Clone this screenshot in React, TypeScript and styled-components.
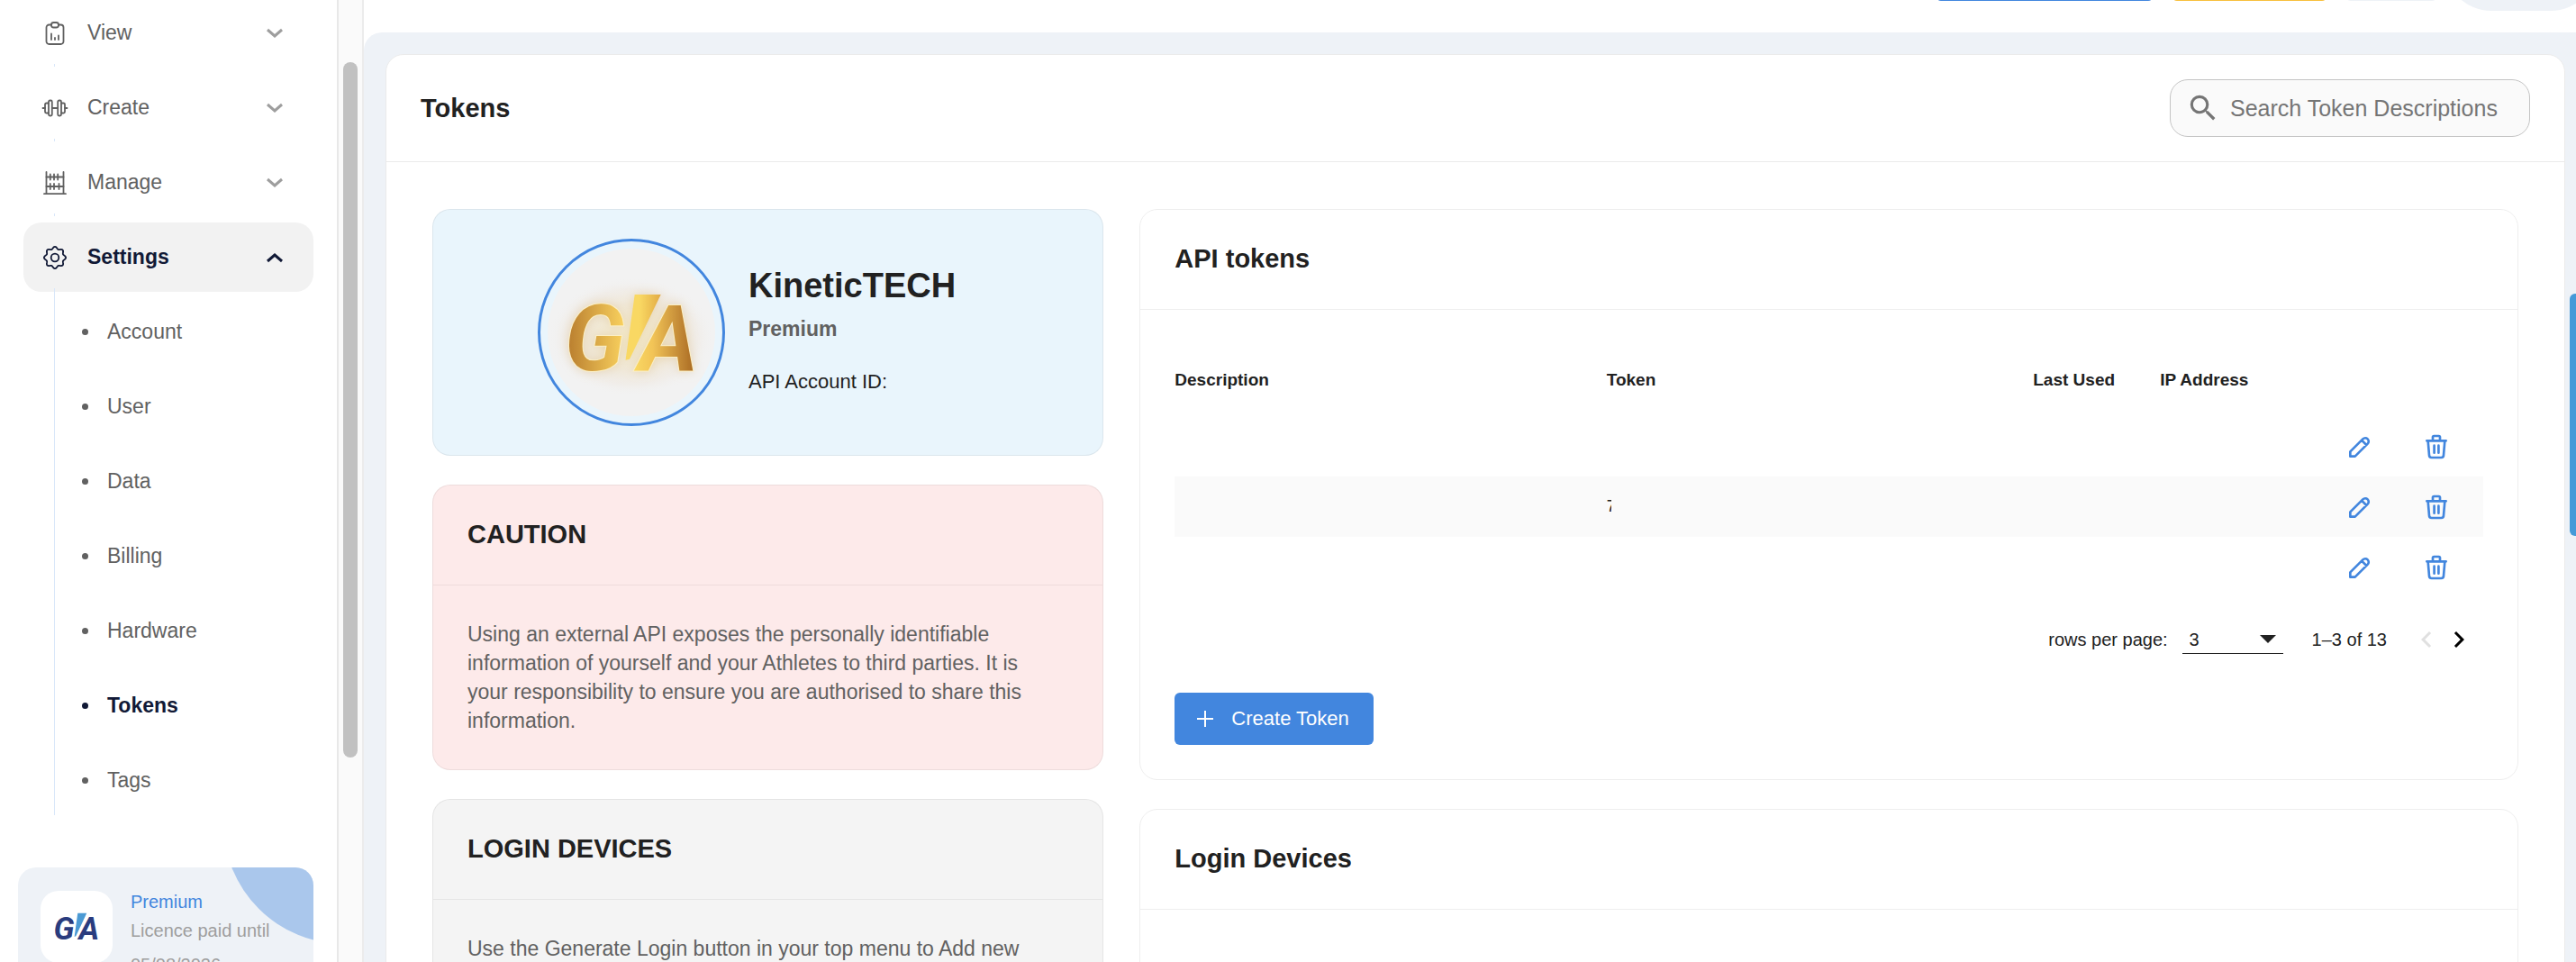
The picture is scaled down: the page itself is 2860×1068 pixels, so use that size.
import React, { useState } from "react";
import styled, { createGlobalStyle } from "styled-components";

const color = {
  blue: "#4286de",
  ink: "#212121",
  navy: "#111936",
  text: "#616161",
  muted: "#9e9e9e",
  surface: "#eef2f7",
  line: "#eeeeee",
};

const GlobalStyle = createGlobalStyle`
  *, *::before, *::after { box-sizing: border-box; }
  body {
    margin: 0;
    background: #fff;
    color: ${color.ink};
    font-family: "Liberation Sans", Arial, Helvetica, sans-serif;
  }
  button, input, select { font-family: inherit; }
  h1, h2, h3, p, ul { margin: 0; padding: 0; }
  ul { list-style: none; }
`;

/* ---------- Page frame ---------- */

const Page = styled.div`
  display: flex;
  height: 100vh;
  overflow: hidden;
`;

const Sidebar = styled.aside`
  flex: 0 0 374px;
  overflow: hidden;
`;

const ScrollTrack = styled.div`
  flex: 0 0 30px;
  display: flex;
  flex-direction: column;
  align-items: center;
  background: #fafafa;
  border-left: 2px solid #e8e8e8;
  border-right: 2px solid #ececec;
`;

const ScrollSpace = styled.div<{ $share: number }>`
  flex: ${(p) => p.$share} 0 0;
`;

const ScrollThumb = styled.div`
  flex: 772 0 0;
  width: 16px;
  border-radius: 8px;
  background: #c1c1c1;
`;

const Column = styled.div`
  flex: 1;
  min-width: 0;
  display: flex;
  flex-direction: column;
`;

/* ---------- Sidebar ---------- */

const Nav = styled.nav`
  margin-top: -2px;
  padding: 0 26px;
`;

const NavList = styled.ul`
  display: flex;
  flex-direction: column;
  gap: 6px;
`;

const NavButton = styled.button<{ $active?: boolean }>`
  position: relative;
  display: flex;
  align-items: center;
  width: 100%;
  height: 77px;
  padding: 0 33px 0 19px;
  border: 0;
  border-radius: 20px;
  background: ${(p) => (p.$active ? "#f2f2f2" : "transparent")};
  color: ${(p) => (p.$active ? color.navy : color.text)};
  font-size: 23px;
  font-weight: ${(p) => (p.$active ? 700 : 400)};
  text-align: left;
  cursor: pointer;

  &::after {
    content: "";
    display: ${(p) => (p.$active ? "none" : "block")};
    position: absolute;
    left: 34px;
    bottom: 1px;
    width: 1px;
    height: 3px;
    background: #d9e7f9;
  }
`;

const NavLabel = styled.span`
  flex: 1;
  margin-left: 20px;
`;

const Chevron = styled.svg<{ $active?: boolean }>`
  color: ${(p) => (p.$active ? color.navy : color.muted)};
`;

const SubList = styled.ul`
  position: relative;
  display: flex;
  flex-direction: column;
  gap: 6px;
  padding-top: 6px;

  &::before {
    content: "";
    position: absolute;
    left: 34px;
    top: -4px;
    bottom: 0;
    width: 1px;
    background: #d9e7f9;
  }
`;

const SubLink = styled.a<{ $active?: boolean }>`
  display: flex;
  align-items: center;
  gap: 21px;
  height: 77px;
  padding-left: 65px;
  color: ${(p) => (p.$active ? color.navy : color.text)};
  font-size: 23px;
  font-weight: ${(p) => (p.$active ? 700 : 400)};
  text-decoration: none;

  &::before {
    content: "";
    width: 7px;
    height: 7px;
    border-radius: 50%;
    background: currentColor;
  }
`;

const LicenceCard = styled.section`
  position: relative;
  overflow: hidden;
  display: flex;
  gap: 20px;
  height: 160px;
  margin: 58px 26px 0 20px;
  padding: 26px 25px;
  border-radius: 20px;
  background: ${color.surface};

  &::before {
    content: "";
    position: absolute;
    top: -183px;
    right: -168px;
    width: 268px;
    height: 268px;
    border-radius: 50%;
    background: #aac7ec;
  }
`;

const LicenceLogo = styled.div`
  display: flex;
  align-items: center;
  justify-content: center;
  flex: 0 0 80px;
  height: 80px;
  border-radius: 20px;
  background: #fff;
`;

const LicenceText = styled.div`
  position: relative;
  font-size: 20px;
  line-height: 24px;
  color: ${color.muted};
`;

const LicencePlan = styled.p`
  margin-bottom: 8px;
  color: ${color.blue};
`;

const LicenceDate = styled.p`
  margin-top: 14px;
`;

/* ---------- Top bar ---------- */

const TopBar = styled.header`
  flex: 0 0 36px;
  display: flex;
  justify-content: flex-end;
  align-items: flex-end;
  gap: 20px;
  padding-bottom: 24px;
  overflow: hidden;
`;

const TopButton = styled.button<{ $bg: string; $width: number }>`
  flex: none;
  width: ${(p) => p.$width}px;
  height: 54px;
  margin-bottom: 11px;
  border: 0;
  border-radius: 6px;
  background: ${(p) => p.$bg};
`;

const ProfileButton = styled.button`
  flex: none;
  width: 170px;
  height: 104px;
  margin: 0 -24px 0 -12px;
  border: 0;
  border-radius: 52px;
  background: ${color.surface};
`;

/* ---------- Main area ---------- */

const Main = styled.main`
  flex: 1;
  min-height: 0;
  padding: 24px 12px 0 24px;
  border-radius: 20px 0 0 0;
  background: ${color.surface};
  overflow: hidden;
`;

const Panel = styled.section`
  min-height: 100%;
  border: 1px solid #ebebeb;
  border-radius: 20px;
  background: #fff;
`;

const PanelHeader = styled.header`
  display: flex;
  align-items: center;
  justify-content: space-between;
  padding: 27px 38px;
  border-bottom: 1px solid #ebebeb;
`;

const Title = styled.h1`
  font-size: 29px;
  line-height: 40px;
`;

const Search = styled.label`
  display: flex;
  align-items: center;
  gap: 11px;
  width: 400px;
  height: 64px;
  padding: 0 17px;
  border: 1px solid #c4c4c4;
  border-radius: 20px;
  background: #fafafa;
  color: #757575;
`;

const SearchInput = styled.input`
  flex: 1;
  min-width: 0;
  padding: 0;
  border: 0;
  outline: 0;
  background: transparent;
  color: ${color.ink};
  font-size: 25px;

  &::placeholder {
    color: #757575;
    opacity: 1;
  }
`;

const PanelBody = styled.div`
  display: grid;
  grid-template-columns: repeat(12, minmax(0, 1fr));
  align-items: start;
  gap: 40px;
  padding: 52px 51px;
`;

const Stack = styled.div<{ $span: number }>`
  grid-column: span ${(p) => p.$span};
  display: flex;
  flex-direction: column;
  gap: 32px;
`;

const Card = styled.section<{ $bg?: string }>`
  border: 1px solid ${(p) => (p.$bg ? "rgba(0, 0, 0, 0.06)" : color.line)};
  border-radius: 20px;
  background: ${(p) => p.$bg ?? "#fff"};
`;

const CardTitle = styled.h2<{ $tinted?: boolean }>`
  padding: 34px 38px 36px;
  border-bottom: 1px solid ${(p) => (p.$tinted ? "rgba(0, 0, 0, 0.06)" : color.line)};
  font-size: 29px;
  line-height: 40px;
`;

const CardBody = styled.div`
  padding: 38px;
`;

const Paragraph = styled.p`
  padding-right: 20px;
  color: ${color.text};
  font-size: 23px;
  line-height: 32px;
`;

/* ---------- Account card ---------- */

const AccountCard = styled(Card)`
  display: flex;
  gap: 26px;
  padding: 32px 32px 32px 116px;
`;

const Avatar = styled.div`
  flex: 0 0 208px;
  height: 208px;
  padding: 8px;
  border: 3px solid ${color.blue};
  border-radius: 50%;
`;

const AvatarFace = styled.div`
  display: flex;
  height: 100%;
  overflow: hidden;
  border-radius: 50%;
  background: #f2f2f2;
`;

const AccountText = styled.div`
  padding-top: 28px;
`;

const AccountName = styled.h2`
  font-size: 38px;
  line-height: 48px;
`;

const AccountPlan = styled.p`
  margin-top: 8px;
  color: ${color.text};
  font-size: 23px;
  font-weight: 700;
  line-height: 32px;
`;

const AccountId = styled.p`
  margin-top: 27px;
  font-size: 22px;
  line-height: 32px;
`;

/* ---------- Token table ---------- */

const Table = styled.table`
  width: 100%;
  table-layout: fixed;
  border-collapse: collapse;
`;

const HeadCell = styled.th<{ $width?: string }>`
  width: ${(p) => p.$width ?? "auto"};
  height: 80px;
  padding: 0;
  font-size: 19px;
  text-align: left;
`;

const Row = styled.tr`
  height: 67px;
  &:nth-child(even) { background: #fafafa; }
`;

const Cell = styled.td`
  padding: 0;
  font-size: 18px;
`;

const TokenPreview = styled.span`
  display: block;
  width: 5px;
  overflow: hidden;
`;

const Actions = styled.div`
  display: flex;
  justify-content: flex-end;
  gap: 45px;
  padding-right: 32px;
`;

const IconButton = styled.button<{ $size: number }>`
  display: flex;
  align-items: center;
  justify-content: center;
  width: ${(p) => p.$size}px;
  height: ${(p) => p.$size}px;
  padding: 0;
  border: 0;
  background: none;
  color: ${color.blue};
  cursor: pointer;
`;

const PageButton = styled(IconButton)`
  color: #000;
  &:disabled { color: #e0e0e0; cursor: default; }
`;

const Pagination = styled.div`
  display: flex;
  align-items: center;
  justify-content: flex-end;
  height: 94px;
  margin-bottom: 12px;
  padding-right: 9px;
  font-size: 20px;
`;

const SelectBox = styled.div`
  position: relative;
  margin: 0 32px 0 16px;

  svg {
    position: absolute;
    right: 8px;
    top: 11px;
    pointer-events: none;
  }
`;

const RowsSelect = styled.select`
  display: block;
  width: 112px;
  height: 32px;
  padding: 0 8px;
  border: 0;
  border-bottom: 1px solid ${color.ink};
  border-radius: 0;
  appearance: none;
  background: transparent;
  color: ${color.ink};
  font-size: 20px;
`;

const Range = styled.span`
  margin-right: 26px;
`;

const CreateButton = styled.button`
  display: flex;
  align-items: center;
  gap: 20px;
  height: 58px;
  padding: 0 27px 0 25px;
  border: 0;
  border-radius: 6px;
  background: ${color.blue};
  color: #fff;
  font-size: 22px;
  cursor: pointer;
`;

const SideTab = styled.button`
  position: fixed;
  right: 0;
  top: 326px;
  width: 7px;
  height: 269px;
  padding: 0;
  border: 0;
  border-radius: 6px 0 0 6px;
  background: #459ad8;
`;

/* ---------- Icons ---------- */

const Line = ({ size = 32, box = 32, width = 2, children }: {
  size?: number; box?: number; width?: number; children: React.ReactNode;
}) => (
  <svg width={size} height={size} viewBox={`0 0 ${box} ${box}`} fill="none" stroke="currentColor"
    strokeWidth={width} strokeLinecap="round" strokeLinejoin="round" aria-hidden="true">
    {children}
  </svg>
);

const ViewIcon = () => (
  <Line width={1.8}>
    <path d="M12 6.5H9.5a3 3 0 0 0-3 3V25a3 3 0 0 0 3 3h13a3 3 0 0 0 3-3V9.500a3 3 0 0 0-3-3H20" />
    <rect x="12" y="4" width="8" height="5.500" rx="2.500" />
    <path d="M12 16.500V23M16 21v2M20 18.500V23" />
  </Line>
);

const CreateIcon = () => (
  <Line width={1.8}>
    <rect x="9" y="7.500" width="3.800" height="17" rx="1.500" />
    <rect x="19.200" y="7.500" width="3.800" height="17" rx="1.500" />
    <path d="M8.800 10.500H6.500a1.500 1.500 0 0 0-1.500 1.500v8a1.500 1.500 0 0 0 1.500 1.500h2.300M23.200 10.500h2.300a1.500 1.500 0 0 1 1.500 1.500v8a1.500 1.500 0 0 1-1.500 1.500h-2.300" />
    <path d="M12.800 16h6.400M2.500 16H5M27 16h2.500" />
  </Line>
);

const ManageIcon = () => (
  <Line width={1.8}>
    <path d="M6.500 4v24M25.500 4v24M4 28.200h24" />
    <path d="M6.500 9.500h19M6.500 20h19" />
    <path d="M10.800 6.500v6M15 6.500v6M19.200 6.500v6M10.800 17v6M15 17v6M20.500 17v6" />
  </Line>
);

const gearPath =
  Array.from({ length: 97 }, (_, i) => {
    const a = (i / 96) * Math.PI * 2;
    const r = 10.9 + 1.2 * Math.cos(8 * a);
    return `${i ? "L" : "M"}${(16 + r * Math.sin(a)).toFixed(2)} ${(16 - r * Math.cos(a)).toFixed(2)}`;
  }).join("") + "Z";

const SettingsIcon = () => (
  <Line width={1.8}>
    <path d={gearPath} />
    <circle cx="16" cy="16" r="4.300" />
  </Line>
);

const Expand = ({ open }: { open?: boolean }) => (
  <Chevron $active={open} width="20" height="12" viewBox="0 0 20 12" fill="none" stroke="currentColor"
    strokeWidth="3" aria-hidden="true">
    <path d={open ? "M2 10L10 3l8 7" : "M2 2L10 9l8-7"} />
  </Chevron>
);

const PencilIcon = () => (
  <Line box={24}>
    <path d="M4 20h4L18.500 9.500a2.828 2.828 0 1 0-4-4L4 16v4M13.500 6.500l4 4" />
  </Line>
);

const TrashIcon = () => (
  <Line box={24}>
    <path d="M4 7h16M10.200 11v6M13.800 11v6M5 7l1 12a2 2 0 0 0 2 2h8a2 2 0 0 0 2-2l1-12M9 7V4a1 1 0 0 1 1-1h4a1 1 0 0 1 1 1v3" />
  </Line>
);

const SearchIcon = () => (
  <svg width="38" height="38" viewBox="0 0 24 24" fill="currentColor" aria-hidden="true">
    <path d="M15.500 14h-.79l-.28-.27A6.471 6.471 0 0 0 16 9.500 6.500 6.500 0 1 0 9.500 16c1.610 0 3.090-.59 4.230-1.570l.27.28v.79l5 4.990L20.490 19l-4.990-5zm-6 0C7.010 14 5 11.990 5 9.500S7.010 5 9.500 5 14 7.010 14 9.500 11.990 14 9.500 14z" />
  </svg>
);

const PageIcon = ({ next }: { next?: boolean }) => (
  <svg width="36" height="36" viewBox="0 0 24 24" fill="currentColor" aria-hidden="true">
    <path d={next
      ? "M10 6L8.590 7.410 13.170 12l-4.580 4.590L10 18l6-6z"
      : "M15.410 7.410L14 6l-6 6 6 6 1.410-1.410L10.830 12z"} />
  </svg>
);

const logoFont = { fontFamily: "Roboto, sans-serif", fontWeight: 700, fontStyle: "italic", fontSize: 101 };

const SmallLogo = () => (
  <svg width="52" height="64" viewBox="18 0 150 186" role="img" aria-label="GA">
    <g {...logoFont} fill="#2a3c7e">
      <text x="19" y="135">G</text>
      <text x="100" y="135">A</text>
    </g>
    <path d="M96.700 49h29L91 122.700l-5 2z" fill="#4b9ad4" />
  </svg>
);

const GoldLogo = () => (
  <svg width="186" height="186" viewBox="0 0 186 186" role="img" aria-label="GA">
    <defs>
      <linearGradient id="goldG" x1="0" x2="1">
        <stop offset="0" stopColor="#b67a2c" />
        <stop offset="1" stopColor="#fad25f" />
      </linearGradient>
      <linearGradient id="goldBolt" x1="0" x2="1">
        <stop offset="0.4" stopColor="#f9d863" />
        <stop offset="1" stopColor="#e2ab44" />
      </linearGradient>
      <linearGradient id="goldA" x1="0" x2="1">
        <stop offset="0" stopColor="#fad963" />
        <stop offset="0.3" stopColor="#f2c457" />
        <stop offset="1" stopColor="#a3621f" />
      </linearGradient>
      <radialGradient id="glow">
        <stop offset="0" stopColor="#f5edcf" />
        <stop offset="0.55" stopColor="#f0e8d8" />
        <stop offset="0.8" stopColor="#f0ebe5" stopOpacity="0.7" />
        <stop offset="1" stopColor="#f2f2f2" stopOpacity="0" />
      </radialGradient>
      <filter id="halo" x="-20%" y="-20%" width="140%" height="140%">
        <feDropShadow dx="0" dy="0" stdDeviation="6" floodColor="#d9b983" floodOpacity="0.45" />
      </filter>
    </defs>
    <ellipse cx="93" cy="98" rx="92" ry="66" fill="url(#glow)" />
    <g filter="url(#halo)">
      <g {...logoFont} stroke="#fbefc4" strokeWidth="2" paintOrder="stroke">
        <text x="19" y="135" fill="url(#goldG)">G</text>
        <text x="101" y="135" fill="url(#goldA)">A</text>
      </g>
      <path d="M96.700 51h29L91 122.700l-4.500 1z" fill="url(#goldBolt)" />
    </g>
  </svg>
);

/* ---------- Content ---------- */

const groups = [
  { label: "View", icon: <ViewIcon /> },
  { label: "Create", icon: <CreateIcon /> },
  { label: "Manage", icon: <ManageIcon /> },
  { label: "Settings", icon: <SettingsIcon />, open: true },
];

const settingsPages = ["Account", "User", "Data", "Billing", "Hardware", "Tokens", "Tags"];

const tokens = ["", "7", ""];

export default function App() {
  const [query, setQuery] = useState("");
  const [rows, setRows] = useState("3");

  return (
    <Page>
      <GlobalStyle />
      <Sidebar>
        <Nav aria-label="Main">
          <NavList>
            {groups.map((g) => (
              <li key={g.label}>
                <NavButton type="button" $active={g.open} aria-expanded={!!g.open}>
                  {g.icon}
                  <NavLabel>{g.label}</NavLabel>
                  <Expand open={g.open} />
                </NavButton>
                {g.open && (
                  <SubList>
                    {settingsPages.map((name) => (
                      <li key={name}>
                        <SubLink href={`#${name.toLowerCase()}`} $active={name === "Tokens"}>{name}</SubLink>
                      </li>
                    ))}
                  </SubList>
                )}
              </li>
            ))}
          </NavList>
        </Nav>
        <LicenceCard>
          <LicenceLogo><SmallLogo /></LicenceLogo>
          <LicenceText>
            <LicencePlan>Premium</LicencePlan>
            <p>Licence paid until</p>
            <LicenceDate>05/08/2026</LicenceDate>
          </LicenceText>
        </LicenceCard>
      </Sidebar>

      <ScrollTrack aria-hidden="true">
        <ScrollSpace $share={69} />
        <ScrollThumb />
        <ScrollSpace $share={227} />
      </ScrollTrack>

      <Column>
        <TopBar>
          <TopButton type="button" aria-label="Generate login" $bg={color.blue} $width={242} />
          <TopButton type="button" aria-label="Upgrade" $bg="#f8bf3c" $width={173} />
          <TopButton type="button" aria-label="Notifications" $bg={color.surface} $width={102} />
          <ProfileButton type="button" aria-label="Profile" />
        </TopBar>
        <Main>
          <Panel>
            <PanelHeader>
              <Title>Tokens</Title>
              <Search>
                <SearchIcon />
                <SearchInput
                  type="text"
                  aria-label="Search Token Descriptions"
                  placeholder="Search Token Descriptions"
                  value={query}
                  onChange={(e) => setQuery(e.target.value)}
                />
              </Search>
            </PanelHeader>
            <PanelBody>
              <Stack $span={4}>
                <AccountCard $bg="#e9f5fc">
                  <Avatar><AvatarFace><GoldLogo /></AvatarFace></Avatar>
                  <AccountText>
                    <AccountName>KineticTECH</AccountName>
                    <AccountPlan>Premium</AccountPlan>
                    <AccountId>API Account ID:</AccountId>
                  </AccountText>
                </AccountCard>
                <Card $bg="#fdeaea">
                  <CardTitle $tinted>CAUTION</CardTitle>
                  <CardBody>
                    <Paragraph>
                      Using an external API exposes the personally identifiable information of yourself and your
                      Athletes to third parties. It is your responsibility to ensure you are authorised to share
                      this information.
                    </Paragraph>
                  </CardBody>
                </Card>
                <Card $bg="#f4f4f4">
                  <CardTitle $tinted>LOGIN DEVICES</CardTitle>
                  <CardBody>
                    <Paragraph>Use the Generate Login button in your top menu to Add new</Paragraph>
                  </CardBody>
                </Card>
              </Stack>

              <Stack $span={8}>
                <Card>
                  <CardTitle>API tokens</CardTitle>
                  <CardBody>
                    <Table>
                      <thead>
                        <tr>
                          <HeadCell $width="33%">Description</HeadCell>
                          <HeadCell $width="32.600%">Token</HeadCell>
                          <HeadCell $width="9.700%">Last Used</HeadCell>
                          <HeadCell $width="11%">IP Address</HeadCell>
                          <HeadCell aria-label="Actions" />
                        </tr>
                      </thead>
                      <tbody>
                        {tokens.map((token, i) => (
                          <Row key={i}>
                            <Cell />
                            <Cell>{token && <TokenPreview>{token}</TokenPreview>}</Cell>
                            <Cell />
                            <Cell />
                            <Cell>
                              <Actions>
                                <IconButton type="button" aria-label="Edit token" $size={40}><PencilIcon /></IconButton>
                                <IconButton type="button" aria-label="Delete token" $size={40}><TrashIcon /></IconButton>
                              </Actions>
                            </Cell>
                          </Row>
                        ))}
                      </tbody>
                    </Table>
                    <Pagination>
                      <label htmlFor="rows">rows per page:</label>
                      <SelectBox>
                        <RowsSelect id="rows" value={rows} onChange={(e) => setRows(e.target.value)}>
                          <option>3</option>
                          <option>5</option>
                          <option>10</option>
                        </RowsSelect>
                        <svg width="18" height="9" viewBox="0 0 18 9" aria-hidden="true">
                          <path d="M0 0h18L9 9z" fill={color.ink} />
                        </svg>
                      </SelectBox>
                      <Range>1–3 of 13</Range>
                      <PageButton type="button" aria-label="Previous page" $size={36} disabled><PageIcon /></PageButton>
                      <PageButton type="button" aria-label="Next page" $size={36}><PageIcon next /></PageButton>
                    </Pagination>
                    <CreateButton type="button">
                      <svg width="18" height="18" viewBox="0 0 18 18" stroke="currentColor" strokeWidth="2" aria-hidden="true">
                        <path d="M9 0v18M0 9h18" />
                      </svg>
                      Create Token
                    </CreateButton>
                  </CardBody>
                </Card>
                <Card>
                  <CardTitle>Login Devices</CardTitle>
                  <CardBody />
                </Card>
              </Stack>
            </PanelBody>
          </Panel>
        </Main>
      </Column>
      <SideTab type="button" aria-label="Open side panel" />
    </Page>
  );
}
